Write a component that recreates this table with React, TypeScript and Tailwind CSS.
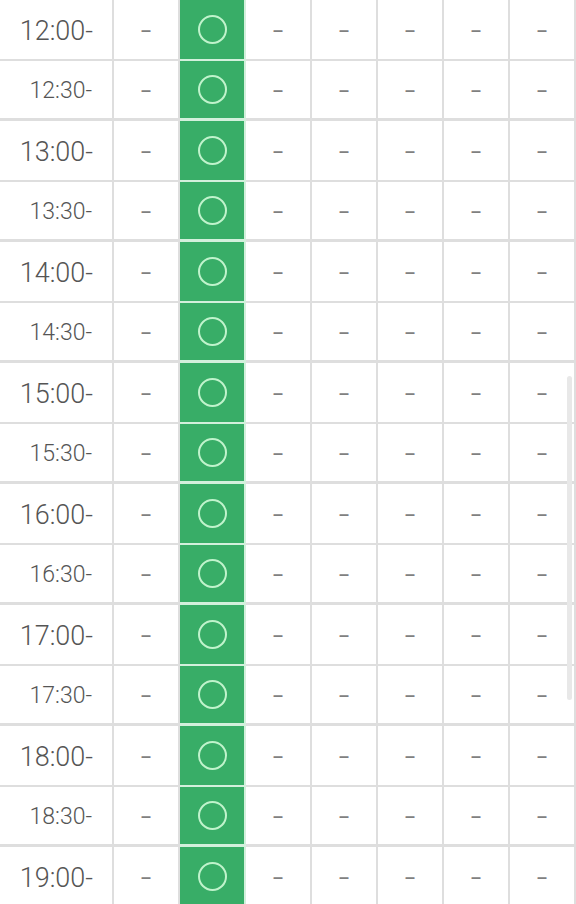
import React from "react";

const times = [
  "12:00", "12:30", "13:00", "13:30", "14:00", "14:30", "15:00", "15:30",
  "16:00", "16:30", "17:00", "17:30", "18:00", "18:30", "19:00",
];

// 7 day columns, only the 2nd one is open
const openCol = 1;

export default function App() {
  return (
    <div
      className="relative h-[904px] w-[576px] overflow-hidden bg-white"
      style={{ fontFamily: 'Roboto, "Noto Sans CJK JP", sans-serif' }}
    >
      <div className="grid grid-cols-[114px_repeat(7,66px)]">
        {times.map((t) => {
          const half = t.endsWith(":30");
          const rowBorder = half ? "border-b-[3px]" : "border-b-2";
          return (
            <React.Fragment key={t}>
              <div
                className={`flex h-[60.5px] items-center justify-end border-r-2 border-[#dedede] pt-[4px] ${rowBorder} ${
                  half ? "pr-[20px] text-[23px]" : "pr-[19px] text-[27px]"
                } font-light text-[#555]`}
              >
                {t}-
              </div>
              {Array.from({ length: 7 }).map((_, i) =>
                i === openCol ? (
                  <div
                    key={i}
                    className={`flex h-[60.5px] items-center justify-center border-r-2 border-[#d3f0dc] bg-[#38ad67] ${rowBorder}`}
                  >
                    <div className="h-[29px] w-[29px] rounded-full border-2 border-[#c0f3cc]" />
                  </div>
                ) : (
                  <div
                    key={i}
                    className={`flex h-[60.5px] items-center justify-center border-r-2 border-[#dedede] pt-[2px] ${rowBorder} text-[18px] font-bold text-[#808080]`}
                    style={{ fontFamily: '"Liberation Sans", sans-serif' }}
                  >
                    –
                  </div>
                )
              )}
            </React.Fragment>
          );
        })}
      </div>

      {/* scrollbar thumb */}
      <div className="absolute right-[4px] top-[376px] h-[324px] w-[5px] rounded-full bg-[#e8e8e8]" />
    </div>
  );
}
